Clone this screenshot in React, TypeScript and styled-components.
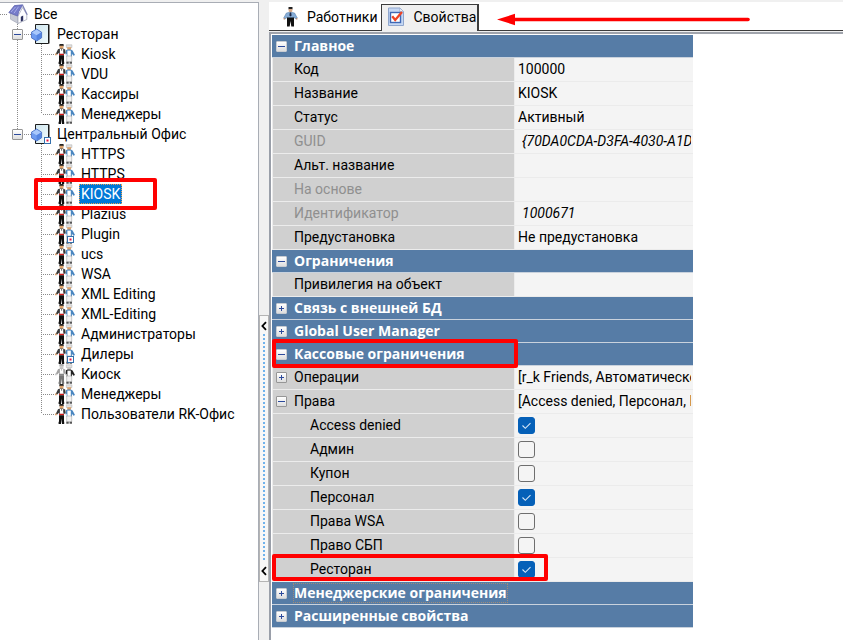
import React, { useState } from 'react';
import styled, { createGlobalStyle, css } from 'styled-components';

const GlobalStyle = createGlobalStyle`
  * { box-sizing: border-box; }
  body {
    margin: 0;
    background: #f0f0f0;
    color: #000;
    font: 14px/20px Roboto, "Liberation Sans", Arial, sans-serif;
  }
  button { font: inherit; color: inherit; }
`;

const dotsDown = 'repeating-linear-gradient(to bottom, #8a8a8a 0 1px, transparent 1px 2px)';
const dotsAcross = 'repeating-linear-gradient(to right, #8a8a8a 0 1px, transparent 1px 2px)';

const Window = styled.div`
  display: grid;
  grid-template-columns: 259px 10px minmax(0, 1fr);
  min-height: 100vh;
  padding-top: 2px;
  overflow: hidden;
`;

/* ---------- tree ---------- */

const TreePane = styled.nav`
  background: #fff;
  border-top: 1px solid #a9adb5;
  border-right: 1px solid #a9adb5;
  padding-top: 1px;
`;

const TreeList = styled.ul`
  list-style: none;
  margin: 0;
  padding: 0;
`;

const BranchList = styled(TreeList)<{ $spine: boolean }>`
  ${(p) =>
    p.$spine &&
    css`
      background: ${dotsDown} 17px 0 / 1px 100% no-repeat;
    `}
`;

const TreeRow = styled.div`
  display: flex;
  align-items: center;
  height: 20px;
  position: relative;
`;

const RootLine = styled.span`
  width: 8px;
  height: 1px;
  background: ${dotsAcross};
`;

const GroupStem = styled.span<{ $last: boolean }>`
  display: flex;
  align-items: center;
  width: 31px;
  height: 20px;
  padding-left: 12px;
  background:
    ${dotsAcross} 24px 10px / 7px 1px no-repeat,
    ${dotsDown} 17px 0 / 1px ${(p) => (p.$last ? '10px' : '20px')} no-repeat;
`;

const LeafStem = styled.span<{ $last: boolean }>`
  width: 55px;
  height: 20px;
  background:
    ${dotsAcross} 43px 10px / 12px 1px no-repeat,
    ${dotsDown} 41px 0 / 1px ${(p) => (p.$last ? '10px' : '20px')} no-repeat;
`;

const TreeLabel = styled.span<{ $selected?: boolean }>`
  margin-left: 4px;
  padding: 0 1px;
  border: 1px solid transparent;
  line-height: 18px;
  white-space: nowrap;
  ${(p) =>
    p.$selected &&
    css`
      background: #0078d7;
      border: 1px dotted #f0a050;
      color: #fff;
    `}
`;

const ExpandButton = styled.button<{ $onBlue?: boolean }>`
  display: flex;
  flex: none;
  align-items: center;
  justify-content: center;
  width: 11px;
  height: 11px;
  padding: 0;
  border: 1px solid ${(p) => (p.$onBlue ? '#c8ccd2' : '#969696')};
  border-radius: 1px;
  background: linear-gradient(#fff, #dedede);
  color: #2c4a9c;
`;

const Mark = styled.div<{ $inset: string }>`
  position: absolute;
  z-index: 1;
  inset: ${(p) => p.$inset};
  border: 4px solid #f00;
  border-radius: 2px;
  pointer-events: none;
`;

const Svg = styled.svg`
  display: block;
  flex: none;
`;

const Expander = ({ open, label, onBlue }: { open: boolean; label: string; onBlue?: boolean }) => (
  <ExpandButton type="button" $onBlue={onBlue} aria-expanded={open} aria-label={label}>
    <Svg width="9" height="9" viewBox="0 0 9 9" aria-hidden="true">
      <path d={open ? 'M1 4.5h7' : 'M2 4.5h5M4.5 2v5'} stroke="currentColor" strokeWidth="1" fill="none" />
    </Svg>
  </ExpandButton>
);

const HouseIcon = () => (
  <Svg width="20" height="20" viewBox="0 0 20 20" aria-hidden="true">
    <path d="M2.5 9v6.2l7.5 4.3v-7z" fill="#c6c9d4" stroke="#9ca1b2" strokeWidth=".6" />
    <path d="M10 19.5V12L14.6 3.5l4.2 7v5z" fill="#fdfdff" stroke="#9ca1b2" strokeWidth=".7" />
    <path d="M.8 8.6L6.400 1.600 14.800.8 10.800 7.600 9.600 12z" fill="#767cc9" stroke="#565cab" strokeWidth=".7" />
    <path d="M3 8l4.500-5M6 9.200l4.500-6.500" stroke="#a6abe8" strokeWidth="1" />
    <path d="M14.600 1.200l4.600 9.600" stroke="#7a7fb4" strokeWidth="1.200" />
    <path d="M12.800 12.800l2.400-1.200v4.800l-2.400 1.300z" fill="#2c3160" />
  </Svg>
);

const Badge = ({ x, y }: { x: number; y: number }) => (
  <g transform={`translate(${x} ${y})`}>
    <rect x=".5" y=".5" width="6" height="6" fill="#fff" stroke="#3470ac" />
    <rect x="2.500" y="2.500" width="2" height="2" fill="#e8103c" />
  </g>
);

const RestaurantIcon = ({ badge }: { badge?: boolean }) => (
  <Svg width="20" height="20" viewBox="0 0 20 20" aria-hidden="true">
    <defs>
      <linearGradient id="door" x1="0" y1="0" x2="1" y2="1">
        <stop offset="0" stopColor="#cfe6ef" />
        <stop offset="1" stopColor="#f1fbfd" />
      </linearGradient>
    </defs>
    <path d="M4.500.5h13v19h-13z" fill="url(#door)" stroke="#1c1c1c" />
    <path d="M18 .5v19" stroke="#1c1c1c" />
    <path d="M.4 8.200l5.200-3.200 5 3.200v5.600l-5 3.200-5.200-3.200z" fill="#6f9cf0" stroke="#3a62bc" strokeWidth=".8" />
    <path d="M.9 8.400l4.700-2.800 4.600 2.800-4.600 2.800z" fill="#a9c8fb" />
    <path d="M5.600 11.200v5.200l4.600-2.900V8.400z" fill="#5585e2" />
    {badge && <Badge x={13} y={13} />}
  </Svg>
);

const StaffIcon = ({ tone = 'color' }: { tone?: 'color' | 'badge' | 'gray' }) => {
  const gray = tone === 'gray';
  const trousers = gray ? '#777' : '#111';
  const jacket = gray ? '#a2a2a2' : '#3a3a3a';
  const skin = gray ? '#c8c8c8' : '#dca26c';
  const sash = gray ? '#888' : '#d01818';
  const sleeve = gray ? '#222' : '#4a86c0';
  return (
    <Svg width="20" height="20" viewBox="0 0 20 20" aria-hidden="true">
      <path d="M4.500 0h4l.3 2.200H4.200z" fill={gray ? '#aaa' : '#222'} />
      <path d="M4.700 1.700h3.700v2.500L6.500 5.400 4.700 4.200z" fill={skin} />
      <path d="M3 5.200l2.200-.6h2.700l2.300.8.6 3.800-1.400.8-.8-1.800v2H4.200V8.400L2 10.800.8 9.800z" fill={jacket} />
      <path d="M4.900 4.900h3.300v5H4.900z" fill="#fff" />
      <path d="M6.100 5.200h1v1.300h-1z" fill={jacket} />
      <path d="M0 9.600h1.700v1.600H0z" fill={skin} />
      <path d="M4 9.800h5v1.500H4z" fill={sash} />
      <path d="M4 11.300h5v6.500h.2V20H7l-.5-5.500L6 20H3.600v-2.200H4z" fill={trousers} />
      <path d="M11.300.8h5.600v2.700h-5.600z" fill="#e2e2e2" stroke="#aaa" strokeWidth=".5" />
      <path d="M12.200 3.200h3.900v2.200l-2 .9-1.900-.9z" fill={skin} />
      <path d="M11 6.200l1.600-.6h3l2 .8L20 11l-1.600.8-1.500-2v3h-5.200V9.800l-1 1z" fill={sleeve} />
      <path d="M12.400 6.600h3.400v5.600h-3.400z" fill="#fff" />
      <path d="M11.700 12h5v5.800h-5z" fill="#f2f2f2" stroke="#999" strokeWidth=".5" />
      <path d="M11.300 17.800h2.400v2h-2.400zm3.300 0H17v2h-2.400z" fill="#555" />
      {tone === 'badge' && <Badge x={12} y={12} />}
    </Svg>
  );
};

type Leaf = { name: string; tone?: 'color' | 'badge' | 'gray'; selected?: boolean };
const tree: { name: string; badge?: boolean; items: Leaf[] }[] = [
  {
    name: 'Ресторан',
    items: [{ name: 'Kiosk' }, { name: 'VDU' }, { name: 'Кассиры' }, { name: 'Менеджеры' }],
  },
  {
    name: 'Центральный Офис',
    badge: true,
    items: [
      { name: 'HTTPS' },
      { name: 'HTTPS' },
      { name: 'KIOSK', selected: true },
      { name: 'Plazius' },
      { name: 'Plugin', tone: 'badge' },
      { name: 'ucs' },
      { name: 'WSA' },
      { name: 'XML Editing' },
      { name: 'XML-Editing' },
      { name: 'Администраторы' },
      { name: 'Дилеры', tone: 'badge' },
      { name: 'Киоск', tone: 'gray' },
      { name: 'Менеджеры' },
      { name: 'Пользователи RK-Офис' },
    ],
  },
];

const Tree = () => (
  <TreePane aria-label="Объекты">
    <TreeRow>
      <RootLine />
      <HouseIcon />
      <TreeLabel>Все</TreeLabel>
    </TreeRow>
    <TreeList>
      {tree.map((group, g) => (
        <li key={group.name}>
          <TreeRow>
            <GroupStem $last={g === tree.length - 1}>
              <Expander open label={group.name} />
            </GroupStem>
            <RestaurantIcon badge={group.badge} />
            <TreeLabel>{group.name}</TreeLabel>
          </TreeRow>
          <BranchList $spine={g < tree.length - 1}>
            {group.items.map((leaf, i) => (
              <li key={i}>
                <TreeRow>
                  <LeafStem $last={i === group.items.length - 1} />
                  <StaffIcon tone={leaf.tone} />
                  <TreeLabel $selected={leaf.selected}>{leaf.name}</TreeLabel>
                  {leaf.selected && <Mark $inset="-6px 101px -6px 34px" />}
                </TreeRow>
              </li>
            ))}
          </BranchList>
        </li>
      ))}
    </TreeList>
  </TreePane>
);

/* ---------- splitter ---------- */

const SplitterTrack = styled.div`
  padding-top: 313px;
`;

const SplitterButton = styled.button`
  display: flex;
  flex-direction: column;
  align-items: center;
  justify-content: space-between;
  width: 10px;
  height: 267px;
  padding: 5px 0;
  border: 1px solid #b4b4b4;
  background: #f7f7f7;
`;

const SplitterDots = styled.span`
  flex: 1;
  width: 2px;
  margin: 3px 0 6px;
  background: repeating-linear-gradient(to bottom, #6fb2ec 0 2px, transparent 2px 4px);
`;

const Chevron = () => (
  <Svg width="6" height="10" viewBox="0 0 6 10" aria-hidden="true">
    <path d="M5 1.200L1.400 5 5 8.800" fill="none" stroke="#000" strokeWidth="1.800" />
  </Svg>
);

/* ---------- tabs ---------- */

const Content = styled.main`
  display: flex;
  flex-direction: column;
  min-width: 0;
`;

const TabBar = styled.div`
  display: flex;
  align-items: flex-end;
  height: 29px;
  background: #fff;
  border-bottom: 1px solid #3c3c3c;
`;

const Tab = styled.button<{ $active?: boolean }>`
  display: flex;
  align-items: center;
  gap: 9px;
  height: 27px;
  margin-bottom: -1px;
  padding: 0 3px 2px 14px;
  border: 0 solid #3c3c3c;
  background: none;
  white-space: nowrap;
  ${(p) =>
    p.$active &&
    css`
      padding: 0 1px 2px 5px;
      border-width: 1px 2px 0 1px;
      background: #f0f0f0;
    `}
`;

const ArrowSvg = styled(Svg)`
  margin: 0 0 4px 18px;
`;

const WorkerIcon = () => (
  <Svg width="15" height="20" viewBox="0 0 15 20" aria-hidden="true">
    <path d="M5.500 0h4v2.400h-4z" fill="#222" />
    <path d="M5.700 2h3.600v2.600L7.500 5.600 5.700 4.600z" fill="#d9a988" />
    <path d="M3.400 6l2.600-.6h3l2.600.6 2.700 5-1.500 1-1.800-2v1.600H4V10l-1.800 2-1.500-1z" fill="#86acd6" stroke="#4f78a4" strokeWidth=".5" />
    <path d="M6.800 5.600h1.400l.4 3-1.100 1-1.100-1z" fill="#1c2a4a" />
    <path d="M4 10.600h7V19.500H8.300L7.500 14l-.8 5.500H4z" fill="#111" />
    <path d="M.6 11H2v1.600H.6zm12.400 0h1.400v1.600H13z" fill="#b98e78" />
  </Svg>
);

const PropertiesIcon = () => (
  <Svg width="18" height="20" viewBox="0 0 18 20" aria-hidden="true">
    <path d="M1.500 1h11.300l3.700 3.700V18.500h-15z" fill="#c6d8f4" stroke="#8fa6cd" />
    <path d="M12.800 1v3.700h3.700z" fill="#fff" stroke="#8fa6cd" strokeWidth=".7" />
    <rect x="3.500" y="5.500" width="10" height="10" fill="#fff" stroke="#3f68b5" strokeWidth="1.400" />
    <path d="M5.200 9.200l3 3.800 6.800-8" fill="none" stroke="#ee4424" strokeWidth="2.300" />
  </Svg>
);

const Panel = styled.section`
  flex: 1;
  margin-top: 1px;
  padding: 1px 0 0 1px;
  background: #fff;
  border-top: 2px solid #a0a4ac;
  border-left: 2px solid #9a9fa9;
`;

/* ---------- property grid ---------- */

const Grid = styled.table`
  width: 100%;
  max-width: 421px;
  table-layout: fixed;
  border-collapse: separate;
  border-spacing: 0;
`;

const NameCol = styled.col`
  width: 243px;
`;

const CategoryRow = styled.tr`
  position: relative;
  height: 23px;
`;

const CategoryCell = styled.th`
  height: 23px;
  padding: 0 0 0 4px;
  background: #567ca6;
  border-bottom: 1px solid #c9d2dd;
  color: #fff;
  font: bold 14px/20px "Open Sans", "Noto Sans", sans-serif;
  text-align: left;
`;

const PropertyRow = styled.tr`
  position: relative;
  height: 24px;
`;

const cell = css`
  height: 24px;
  font-weight: normal;
  text-align: left;
  white-space: nowrap;
`;

const NameCell = styled.th<{ $muted?: boolean; $indent?: boolean }>`
  ${cell}
  padding: 0 4px 1px ${(p) => (p.$indent ? 37 : 3)}px;
  background: #d0d0d0;
  border: solid #ececec;
  border-width: 0 1px 1px 1px;
  color: ${(p) => (p.$muted ? '#8f8f8f' : '#000')};
`;

const ValueCell = styled.td<{ $italic?: boolean }>`
  ${cell}
  padding: 0 2px 1px ${(p) => (p.$italic ? 7 : 3)}px;
  background: #f4f4f4;
  border-bottom: 1px solid #ebebeb;
  font-style: ${(p) => (p.$italic ? 'italic' : 'normal')};
`;

const Clip = styled.div`
  overflow: hidden;
`;

const Caption = styled.span<{ $focus?: boolean }>`
  line-height: 18px;
  outline: ${(p) => (p.$focus ? '1px dotted #a08c78' : 'none')};
`;

const Line = styled.div`
  display: flex;
  align-items: center;
  gap: 7px;
`;

const Spacer = styled.span`
  width: 11px;
`;

const Check = styled.input`
  appearance: none;
  display: block;
  width: 17px;
  height: 17px;
  margin: 0;
  border: 1px solid #6e6e6e;
  border-radius: 3px;
  background: #f4f4f4;
  &:checked {
    border-color: #0560b8;
    background: #0560b8
      url("data:image/svg+xml,%3Csvg xmlns='http://www.w3.org/2000/svg' viewBox='0 0 15 15'%3E%3Cpath d='M3.500 7.500l2.800 2.800 5.200-5.200' fill='none' stroke='%23d5e6f7' stroke-width='1.100'/%3E%3C/svg%3E")
      center / 15px 15px no-repeat;
  }
`;

type Prop = {
  kind?: 'category' | 'parent' | 'check';
  name: string;
  value?: string;
  open?: boolean;
  muted?: boolean;
  italic?: boolean;
  checked?: boolean;
  focus?: boolean;
  mark?: string;
};

const rows: Prop[] = [
  { kind: 'category', name: 'Главное', open: true },
  { name: 'Код', value: '100000' },
  { name: 'Название', value: 'KIOSK' },
  { name: 'Статус', value: 'Активный' },
  { name: 'GUID', value: '{70DA0CDA-D3FA-4030-A1D', muted: true, italic: true },
  { name: 'Альт. название' },
  { name: 'На основе', muted: true },
  { name: 'Идентификатор', value: '1000671', muted: true, italic: true },
  { name: 'Предустановка', value: 'Не предустановка' },
  { kind: 'category', name: 'Ограничения', open: true },
  { name: 'Привилегия на объект' },
  { kind: 'category', name: 'Связь с внешней БД' },
  { kind: 'category', name: 'Global User Manager' },
  { kind: 'category', name: 'Кассовые ограничения', open: true, mark: '-4px 175px -2px 0' },
  { kind: 'parent', name: 'Операции', value: '[r_k Friends, Автоматическо' },
  { kind: 'parent', name: 'Права', value: '[Access denied, Персонал, Р', open: true },
  { kind: 'check', name: 'Access denied', checked: true },
  { kind: 'check', name: 'Админ' },
  { kind: 'check', name: 'Купон' },
  { kind: 'check', name: 'Персонал', checked: true },
  { kind: 'check', name: 'Права WSA' },
  { kind: 'check', name: 'Право СБП' },
  { kind: 'check', name: 'Ресторан', checked: true, mark: '-4px 145px 1px 0' },
  { kind: 'category', name: 'Менеджерские ограничения', focus: true },
  { kind: 'category', name: 'Расширенные свойства' },
];

const Category = ({ row }: { row: Prop }) => (
  <CategoryRow>
    <CategoryCell colSpan={2} scope="colgroup">
      <Line>
        <Expander open={!!row.open} label={row.name} onBlue />
        <Caption $focus={row.focus}>{row.name}</Caption>
      </Line>
      {row.mark && <Mark $inset={row.mark} />}
    </CategoryCell>
  </CategoryRow>
);

const Property = ({ row, id }: { row: Prop; id: string }) => {
  const [checked, setChecked] = useState(!!row.checked);
  const isCheck = row.kind === 'check';
  return (
    <PropertyRow>
      <NameCell scope="row" $muted={row.muted} $indent={isCheck}>
        {isCheck ? (
          <label htmlFor={id}>{row.name}</label>
        ) : (
          <Line>
            {row.kind === 'parent' ? <Expander open={!!row.open} label={row.name} /> : <Spacer />}
            <span>{row.name}</span>
          </Line>
        )}
        {row.mark && <Mark $inset={row.mark} />}
      </NameCell>
      <ValueCell $italic={row.italic}>
        {isCheck ? (
          <Check type="checkbox" id={id} checked={checked} onChange={(e) => setChecked(e.target.checked)} />
        ) : (
          <Clip>{row.value}</Clip>
        )}
      </ValueCell>
    </PropertyRow>
  );
};

export default function App() {
  return (
    <>
      <GlobalStyle />
      <Window>
        <Tree />
        <SplitterTrack>
          <SplitterButton type="button" aria-label="Свернуть панель">
            <Chevron />
            <SplitterDots />
            <Chevron />
          </SplitterButton>
        </SplitterTrack>
        <Content>
          <TabBar role="tablist">
            <Tab type="button" role="tab" aria-selected="false">
              <WorkerIcon />
              Работники
            </Tab>
            <Tab type="button" role="tab" aria-selected="true" $active>
              <PropertiesIcon />
              Свойства
            </Tab>
            <ArrowSvg width="254" height="13" viewBox="0 0 254 13" aria-hidden="true">
              <path d="M0 6.500L18 .8v11.400z" fill="#f00" />
              <path d="M16 6.500h235" stroke="#f00" strokeWidth="3.600" strokeLinecap="round" />
            </ArrowSvg>
          </TabBar>
          <Panel>
            <Grid>
              <colgroup>
                <NameCol />
                <col />
              </colgroup>
              <tbody>
                {rows.map((row, i) =>
                  row.kind === 'category' ? (
                    <Category key={i} row={row} />
                  ) : (
                    <Property key={i} row={row} id={`prop-${i}`} />
                  ),
                )}
              </tbody>
            </Grid>
          </Panel>
        </Content>
      </Window>
    </>
  );
}
